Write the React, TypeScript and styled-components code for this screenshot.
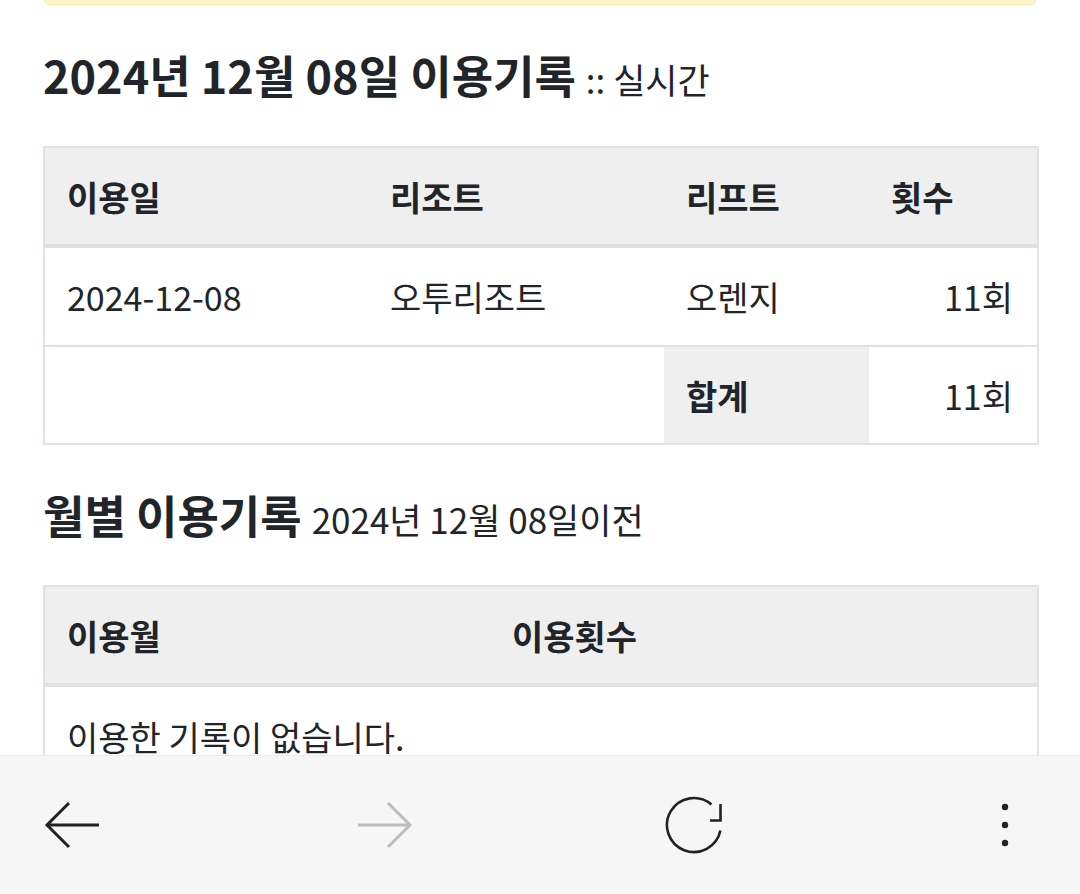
import React from "react";
import styled, { createGlobalStyle } from "styled-components";

const Global = createGlobalStyle`
  html, body { margin: 0; padding: 0; background: #ffffff; }
  body {
    font-family: "Noto Sans CJK KR", "Noto Sans", sans-serif;
    color: #212529;
    overflow: hidden;
  }
  * { box-sizing: border-box; }
`;

const Page = styled.div`
  width: 1080px;
  height: 894px;
  overflow: hidden;
  padding: 0 43px;
`;

const Banner = styled.div`
  height: 5px;
  margin: 0 1px 0 1px;
  background: #fff3cd;
  border: 1px solid #ffeaa6;
  border-top: none;
  border-radius: 0 0 8px 8px;
`;

const Title = styled.h2<{ $mt: number }>`
  margin: ${(p) => p.$mt}px 0 0 0;
  font-size: 45px;
  line-height: 60px;
  font-weight: 700;
  white-space: nowrap;
`;

const Sub = styled.span`
  font-size: 35px;
  font-weight: 400;
  margin-left: 10px;
`;

const Table = styled.table<{ $mt: number }>`
  width: 994px;
  margin-top: ${(p) => p.$mt}px;
  border-collapse: collapse;
  table-layout: fixed;
  border: 2px solid #dee2e6;
  font-size: 34px;
`;

const HeadCell = styled.th`
  height: 99px;
  padding: 0 22px;
  background: #efefef;
  text-align: left;
  font-weight: 700;
  vertical-align: middle;
  border-bottom: 4px solid #dee2e6;
`;

const Cell = styled.td<{ $right?: boolean; $shade?: boolean; $bold?: boolean; $h: number }>`
  height: ${(p) => p.$h}px;
  padding: 0 ${(p) => (p.$right ? 24 : 22)}px 0 22px;
  vertical-align: middle;
  text-align: ${(p) => (p.$right ? "right" : "left")};
  background: ${(p) => (p.$shade ? "#efefef" : "#ffffff")};
  font-weight: ${(p) => (p.$bold ? 700 : 400)};
  border-top: 2px solid #dee2e6;
`;

const Nav = styled.nav`
  position: fixed;
  left: 0;
  right: 0;
  bottom: 0;
  height: 139px;
  background: #f6f6f6;
  border-top: 1px solid #ebebeb;
  display: flex;
  align-items: center;
  justify-content: space-between;
  padding: 0 45px 0 43px;
`;

const NavButton = styled.button`
  width: 60px;
  height: 60px;
  padding: 0;
  border: none;
  background: transparent;
  display: flex;
  align-items: center;
  justify-content: center;
`;

const Arrow = ({ dir, color }: { dir: "left" | "right"; color: string }) => (
  <svg width="60" height="60" viewBox="0 0 60 60" fill="none">
    {dir === "left" ? (
      <g stroke={color} strokeWidth="3" strokeLinecap="butt" strokeLinejoin="miter">
        <path d="M4 30 H56" />
        <path d="M26 8 L4 30 L26 52" />
      </g>
    ) : (
      <g stroke={color} strokeWidth="3" strokeLinecap="butt" strokeLinejoin="miter">
        <path d="M4 30 H56" />
        <path d="M34 8 L56 30 L34 52" />
      </g>
    )}
  </svg>
);

const Refresh = () => (
  <svg width="60" height="60" viewBox="0 0 60 60" fill="none">
    <g stroke="#222" strokeWidth="2.6" fill="none">
      <path d="M56.4 35.6 A27 27 0 1 1 47.5 9.5" />
      <path d="M56.5 9 V25.5 H46" />
    </g>
  </svg>
);

const Kebab = () => (
  <svg width="60" height="60" viewBox="0 0 60 60">
    <g fill="#222">
      <circle cx="30" cy="12" r="3.2" />
      <circle cx="30" cy="30" r="3.2" />
      <circle cx="30" cy="48" r="3.2" />
    </g>
  </svg>
);

export default function App() {
  return (
    <>
      <Global />
      <Page>
        <Banner />
        <Title $mt={40}>
          2024년 12월 08일 이용기록<Sub>:: 실시간</Sub>
        </Title>
        <Table $mt={37}>
          <colgroup>
            <col style={{ width: 324 }} />
            <col style={{ width: 296 }} />
            <col style={{ width: 205 }} />
            <col style={{ width: 169 }} />
          </colgroup>
          <thead>
            <tr>
              <HeadCell>이용일</HeadCell>
              <HeadCell>리조트</HeadCell>
              <HeadCell>리프트</HeadCell>
              <HeadCell>횟수</HeadCell>
            </tr>
          </thead>
          <tbody>
            <tr>
              <Cell $h={100}>2024-12-08</Cell>
              <Cell $h={100}>오투리조트</Cell>
              <Cell $h={100}>오렌지</Cell>
              <Cell $h={100} $right>11회</Cell>
            </tr>
            <tr>
              <Cell $h={98}></Cell>
              <Cell $h={98}></Cell>
              <Cell $h={98} $shade $bold>합계</Cell>
              <Cell $h={98} $right>11회</Cell>
            </tr>
          </tbody>
        </Table>
        <Title $mt={40}>
          월별 이용기록<Sub>2024년 12월 08일이전</Sub>
        </Title>
        <Table $mt={36}>
          <colgroup>
            <col style={{ width: 446 }} />
            <col style={{ width: 548 }} />
          </colgroup>
          <thead>
            <tr>
              <HeadCell>이용월</HeadCell>
              <HeadCell>이용횟수</HeadCell>
            </tr>
          </thead>
          <tbody>
            <tr>
              <Cell $h={101} colSpan={2}>이용한 기록이 없습니다.</Cell>
            </tr>
          </tbody>
        </Table>
      </Page>
      <Nav>
        <NavButton aria-label="뒤로">
          <Arrow dir="left" color="#222" />
        </NavButton>
        <NavButton aria-label="앞으로">
          <Arrow dir="right" color="#bdbdbd" />
        </NavButton>
        <NavButton aria-label="새로고침">
          <Refresh />
        </NavButton>
        <NavButton aria-label="메뉴">
          <Kebab />
        </NavButton>
      </Nav>
    </>
  );
}
